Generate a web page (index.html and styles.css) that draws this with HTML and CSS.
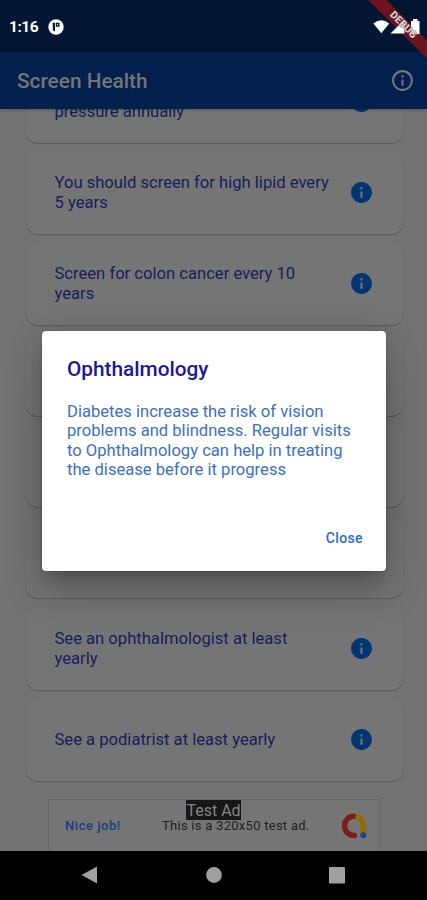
FILE: index.html
```html
<!DOCTYPE html>
<html lang="en">
<head>
<meta charset="utf-8">
<title>Screen Health</title>
<link rel="stylesheet" href="styles.css">
</head>
<body>
<svg width="0" height="0" class="defs">
  <symbol id="info" viewBox="0 0 24 24"><path d="M12 2C6.480 2 2 6.480 2 12s4.480 10 10 10 10-4.480 10-10S17.520 2 12 2zm1 15h-2v-6h2v6zm0-8h-2V7h2v2z"/></symbol>
  <symbol id="info-outline" viewBox="0 0 24 24"><path d="M11 7h2v2h-2zm0 4h2v6h-2zm1-9C6.480 2 2 6.480 2 12s4.480 10 10 10 10-4.480 10-10S17.520 2 12 2zm0 18c-4.410 0-8-3.590-8-8s3.590-8 8-8 8 3.590 8 8-3.590 8-8 8z"/></symbol>
</svg>
<div class="phone">
  <header class="status">
    <span class="time">1:16</span>
    <svg class="notif" viewBox="0 0 16 16"><circle cx="8" cy="8" r="7.700" fill="#fff"/><path d="M4.800 3.700h2.200v8.600a2.200 2.200 0 0 1-2.200-1zM7.800 3.700h3.700v4H7.800z" fill="#021633"/><path d="M9.200 5h1v1.300h-1z" fill="#fff"/></svg>
    <svg class="signals" viewBox="0 0 50 18"><path d="M.5 5.500Q8.300 -1 16.200 5.500L8.300 15.200z"/><path d="M17.500 15.500L31.500 1.500v14z"/><path d="M38 3h2V1h4.500v2h2v13H38z"/></svg>
  </header>
  <div class="appbar">
    <h1>Screen Health</h1>
    <svg><use href="#info-outline"/></svg>
  </div>
  <main class="list">
    <div class="card"><p>You should screen for blood<br>pressure annually</p><svg><use href="#info"/></svg></div>
    <div class="card"><p>You should screen for high lipid every 5 years</p><svg><use href="#info"/></svg></div>
    <div class="card"><p>Screen for colon cancer every 10<br>years</p><svg><use href="#info"/></svg></div>
    <div class="card"></div>
    <div class="card"></div>
    <div class="card"></div>
    <div class="card"><p>See an ophthalmologist at least<br>yearly</p><svg><use href="#info"/></svg></div>
    <div class="card"><p>See a podiatrist at least yearly</p><svg><use href="#info"/></svg></div>
  </main>
  <div class="ad">
    <span class="nice">Nice job!</span>
    <span class="copy">This is a 320x50 test ad.</span>
    <svg class="admob" viewBox="0 0 26 26" fill="none" stroke-width="5.400"><path d="M13 3.300A9.400 9.400 0 0 1 22.400 12.700V21" stroke="#8f6c08"/><path d="M14.500 3.300H13A9.600 9.600 0 0 0 13.200 22.500" stroke="#7c1d17"/><circle cx="13.400" cy="22.500" r="2.700" fill="#7c1d17"/><circle cx="22.300" cy="22.300" r="3" fill="#1c4382"/></svg>
    <span class="tag">Test Ad</span>
  </div>
  <nav class="nav">
    <svg viewBox="0 0 18 18"><path d="M16 .5v17L.5 9z"/></svg>
    <svg viewBox="0 0 18 18"><circle cx="9" cy="9" r="7.900"/></svg>
    <svg viewBox="0 0 18 18"><rect x="1" y="1" width="16" height="16.500" rx=".8"/></svg>
  </nav>
  <section class="dialog">
    <h2>Ophthalmology</h2>
    <p>Diabetes increase the risk of vision problems and blindness. Regular visits to Ophthalmology can help in treating the disease before it progress</p>
    <button>Close</button>
  </section>
  <div class="ribbon"><span class="band"></span><span class="label">DEBUG</span></div>
</div>
</body>
</html>
```
FILE: styles.css
```css
* { box-sizing: border-box; }
body { margin: 0; font-family: Roboto, sans-serif; }
h1, h2, p { margin: 0; }
.defs { position: absolute; }
.phone {
  position: relative;
  display: flex;
  flex-direction: column;
  width: 427px;
  height: 900px;
  overflow: hidden;
  background: #737373;
}
.status {
  display: flex;
  align-items: center;
  height: 52px;
  padding: 1px 6px 0 9px;
  background: #021633;
  color: #fff;
}
.time { width: 39px; font-size: 15.500px; font-weight: 700; letter-spacing: -.5px; }
.notif { width: 16px; height: 16px; }
.signals {
  position: relative;
  z-index: 4;
  width: 50px;
  height: 18px;
  margin: 0 -2px 0 auto;
  fill: #fff;
}
.appbar {
  position: relative;
  z-index: 1;
  display: flex;
  align-items: center;
  justify-content: space-between;
  height: 57px;
  padding: 0 12px 0 17px;
  background: #02204d;
  color: #757575;
  box-shadow: 0 1px 3px rgba(0, 0, 0, .25);
}
.appbar h1 { font-size: 20.800px; font-weight: 500; }
.appbar svg { width: 25px; height: 25px; fill: #757575; }
.list {
  display: flex;
  flex-direction: column;
  gap: 9.200px;
  height: 690px;
  padding: 0 24.500px 0 26px;
  overflow: hidden;
}
.card {
  display: flex;
  flex-shrink: 0;
  align-items: center;
  justify-content: space-between;
  height: 82px;
  padding: 0 29px 0 28.500px;
  border-radius: 12px;
  background: #757575;
  box-shadow: 0 1px 1px rgba(0, 0, 0, .18), 0 1px 2px rgba(0, 0, 0, .06);
}
.card:first-child { margin-top: -48.500px; }
.card p {
  width: 283px;
  color: #171d5c;
  font-size: 16.600px;
  line-height: 19.700px;
}
.card svg { width: 25px; height: 25px; fill: #023672; }
.ad {
  position: relative;
  display: flex;
  align-items: center;
  width: 332px;
  height: 52px;
  margin-left: 48px;
  padding: 0 12px 0 16px;
  border: 1px solid #666;
  border-bottom: 0;
  background: #757575;
  font-size: 13px;
}
.nice { width: 97px; color: #1b3f82; font-weight: 500; letter-spacing: .55px; }
.copy { color: #222; letter-spacing: .27px; white-space: nowrap; }
.admob { width: 26px; height: 26px; margin-left: auto; }
.tag {
  position: absolute;
  top: 0;
  left: 137px;
  width: 55px;
  height: 20px;
  background: #171717;
  color: #858585;
  font-size: 16px;
  line-height: 21px;
  text-align: center;
}
.nav {
  display: flex;
  flex: 1;
  align-items: center;
  justify-content: space-between;
  padding: 0 81px 1px;
  background: #000;
}
.nav svg { width: 18px; height: 18px; fill: #a0a0a0; }
.dialog {
  position: absolute;
  top: 331px;
  left: 42px;
  z-index: 2;
  display: flex;
  flex-direction: column;
  width: 344px;
  height: 240px;
  padding: 25px;
  border-radius: 4px;
  background: #fff;
  box-shadow: 0 11px 15px -7px rgba(0, 0, 0, .2), 0 24px 38px 3px rgba(0, 0, 0, .14), 0 5px 32px 4px rgba(0, 0, 0, .12), 0 0 2px rgba(0, 0, 0, .3);
}
.dialog h2 { color: #1a1a96; font-size: 20.800px; font-weight: 500; line-height: 26px; }
.dialog p {
  margin: 19.500px -5px 0 0;
  color: #3d70c4;
  font-size: 16.600px;
  line-height: 19.600px;
}
.dialog button {
  align-self: flex-end;
  margin: auto -2px -1px 0;
  padding: 0;
  border: 0;
  background: none;
  color: #2a6cc8;
  font: 500 14px/17px Roboto, sans-serif;
  letter-spacing: .4px;
}
.ribbon {
  position: absolute;
  top: 0;
  right: 0;
  width: 60px;
  height: 60px;
  overflow: hidden;
}
.band, .label {
  position: absolute;
  top: 19px;
  left: -14.500px;
  width: 100px;
  height: 12.500px;
  transform: rotate(45deg);
}
.band { z-index: 3; background: #6b1420; }
.label {
  z-index: 5;
  color: #d8cccc;
  font-size: 10.500px;
  font-weight: 900;
  line-height: 12.500px;
  text-align: center;
  text-shadow: 0 0 1px #4a1018;
}
```
